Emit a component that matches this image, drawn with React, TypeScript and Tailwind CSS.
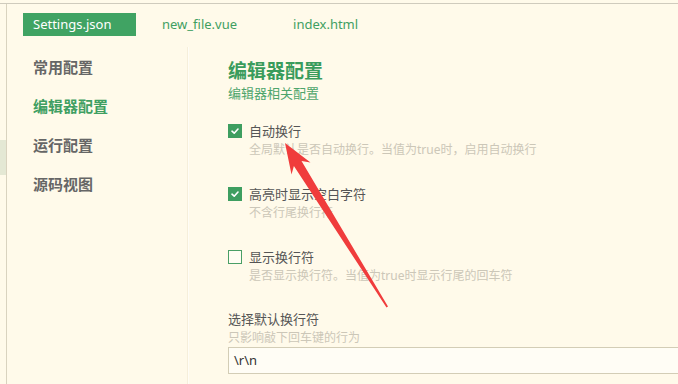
import React from "react";

const FONT = { fontFamily: '"Noto Sans", "Noto Sans CJK SC", sans-serif' };

function Check({ checked }: { checked: boolean }) {
  if (checked) {
    return (
      <div className="w-[14px] h-[14px] bg-[#3e9e60] flex items-center justify-center shrink-0">
        <svg width="10" height="10" viewBox="0 0 10 10">
          <path d="M2 5.2 L4.2 7.2 L8 3" stroke="#ffffff" strokeWidth="1.6" fill="none" strokeLinecap="round" strokeLinejoin="round" />
        </svg>
      </div>
    );
  }
  return <div className="w-[14px] h-[14px] border border-[#4a9f66] bg-[#fffdf3] shrink-0" />;
}

function Item({ checked, label, desc, first }: { checked: boolean; label: string; desc: string; first?: boolean }) {
  return (
    <div className={first ? "mt-[20px]" : "mt-[26px]"}>
      <div className="flex items-center h-[18px]">
        <Check checked={checked} />
        <span className="ml-[7px] text-[13px] leading-[18px] text-[#555555]">{label}</span>
      </div>
      <div className="ml-[21px] text-[12px] leading-[19px] text-[#ccc7b8]">{desc}</div>
    </div>
  );
}

export default function App() {
  return (
    <div className="relative w-[678px] h-[384px] overflow-hidden bg-[#fffaea]" style={FONT}>
      <div className="pt-[3px] h-full">
        <div className="border-t border-[#cfcbbd] h-full flex">
          <div className="w-[6px] shrink-0 flex flex-col">
            <div className="h-[136px]" />
            <div className="h-[35px] bg-[#e4e8d4]" />
          </div>
          <div className="border-l border-[#d9d3bf] flex-1 flex flex-col">
            {/* tabs */}
            <div className="h-[43px] pt-[9px] flex items-start">
              <div className="ml-[16px] h-[23px] w-[113px] bg-[#40a363] text-white text-[13px] leading-[23px] pl-[10px]">
                Settings.json
              </div>
              <div className="ml-[26px] text-[#3f9f62] text-[13px] leading-[23px]">new_file.vue</div>
              <div className="ml-[56px] text-[#3f9f62] text-[13px] leading-[23px]">index.html</div>
            </div>
            <div className="flex flex-1">
              {/* sidebar */}
              <div className="w-[180px] shrink-0 pt-[1px] pl-[26px] flex flex-col">
                <div className="h-[39px] leading-[39px] text-[15px] font-bold text-[#666666]">常用配置</div>
                <div className="h-[39px] leading-[39px] text-[15px] font-bold text-[#3f9f62]">编辑器配置</div>
                <div className="h-[39px] leading-[39px] text-[15px] font-bold text-[#666666]">运行配置</div>
                <div className="h-[39px] leading-[39px] text-[15px] font-bold text-[#666666]">源码视图</div>
              </div>
              <div className="w-[2px] shrink-0 bg-[#f6efdb] border-r border-[#fffdf6]" />
              {/* content */}
              <div className="flex-1 pl-[39px] pt-[12px] flex flex-col">
                <div className="text-[19px] leading-[24px] font-bold text-[#3a9c5c]">编辑器配置</div>
                <div className="mt-[1px] text-[13px] leading-[18px] text-[#4ea56c]">编辑器相关配置</div>
                <Item first checked label="自动换行" desc="全局默认是否自动换行。当值为true时，启用自动换行" />
                <Item checked label="高亮时显示空白字符" desc="不含行尾换行符" />
                <Item checked={false} label="显示换行符" desc="是否显示换行符。当值为true时显示行尾的回车符" />
                <div className="mt-[25px] text-[13px] leading-[18px] text-[#555555]">选择默认换行符</div>
                <div className="text-[12px] leading-[19px] text-[#ccc7b8]">只影响敲下回车键的行为</div>
                <div className="mt-[0px] h-[27px] w-[520px] border border-[#d3cdb6] bg-[#fffdf5] pl-[5px] text-[13px] leading-[25px] text-[#333333]">
                  \r\n
                </div>
              </div>
            </div>
          </div>
        </div>
      </div>
      <svg className="absolute left-0 top-0 pointer-events-none" width="678" height="384" viewBox="0 0 678 384">
        <polygon
          points="285,143 310.5,162.5 301.5,161 388,306.5 386.5,307.5 293.9,166 291.5,174.5"
          fill="#f03c3c"
        />
      </svg>
    </div>
  );
}
